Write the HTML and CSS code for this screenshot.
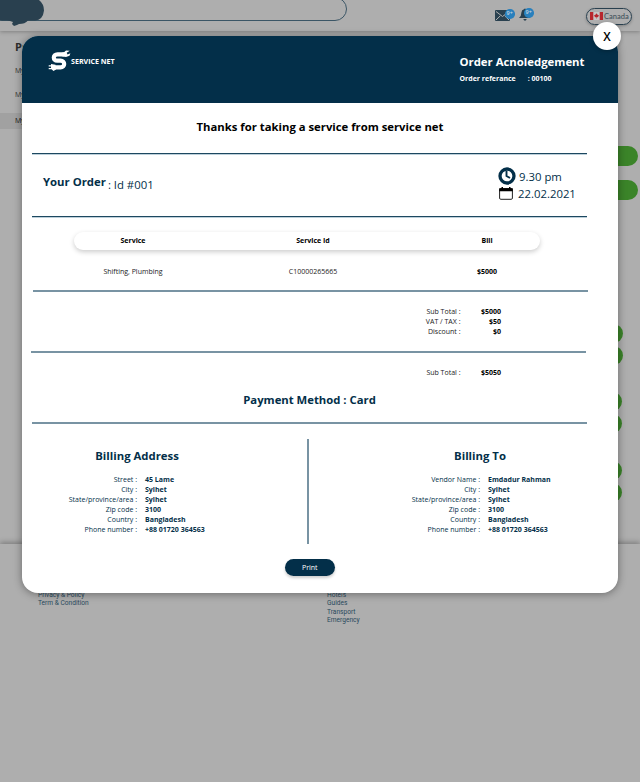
FILE: index.html
```html
<!DOCTYPE html>
<html lang="en">
<head>
<meta charset="utf-8">
<title>Order</title>
<link rel="stylesheet" href="styles.css">
</head>
<body>
<div class="page">
  <header class="topbar">
    <div class="brand">
      <svg class="brand-mark" width="90" height="31" viewBox="0 0 90 31"><path d="M0 0H39Q44 4 44 10.500Q43 20 35 20.500H28Q25 24 19 24L17 25L14 26L12 24L13 22L10 21L7 20.500H0Z" fill="#29404f"/></svg>
    </div>
    <div class="search"></div>
    <div class="alerts">
      <div class="alert mail">
        <svg width="15" height="11" viewBox="0 0 15 11"><rect width="15" height="11" rx="1" fill="#29404f"/><path d="M1 1.500L7.500 6.500L14 1.500M1 10L5.300 5.800M14 10L9.700 5.800" fill="none" stroke="#aeaeae"/></svg>
        <span class="count">9+</span>
      </div>
      <div class="alert bell">
        <svg width="12" height="13" viewBox="0 0 12 13"><path d="M0 10Q2.400 8 2.400 4.500Q2.600 1.700 5 1.200Q6 0 7 1.200Q9.500 2 9.500 5Q9.500 8 11.500 10ZM4.300 11H7.700Q7.200 12.800 6 12.800Q4.800 12.800 4.300 11Z" fill="#29404f"/></svg>
        <span class="count">9+</span>
      </div>
    </div>
    <div class="country">
      <svg width="13" height="8" viewBox="0 0 13 8"><rect width="13" height="8" fill="#c5c5c5"/><path d="M0 0H3.300V8H0ZM9.700 0H13V8H9.700ZM6.500 1.200L7.300 2.600L9 3.500L7.800 5.200L6.700 5.300V6.800H6.300V5.300L5.200 5.200L4 3.500L5.700 2.600Z" fill="#b7262d"/></svg>
      <span>Canada</span>
    </div>
  </header>
  <main class="content">
    <nav class="side">
      <h2>Profile</h2>
      <a>My Account</a>
      <a>My Service</a>
      <a class="current">My Order</a>
    </nav>
    <div class="actions">
      <i class="pill large"></i><i class="pill large"></i>
      <i class="pill first"></i><i class="pill"></i>
      <i class="pill near second"></i><i class="pill near"></i>
      <i class="pill near third"></i><i class="pill near"></i>
    </div>
  </main>
  <footer class="footer">
    <div class="links legal"><a>Privacy &amp; Policy</a><a>Term &amp; Condition</a></div>
    <div class="links"><a>Hotels</a><a>Guides</a><a>Transport</a><a>Emergency</a></div>
  </footer>
</div>

<section class="modal">
  <button class="close">X</button>
  <header class="modal-head">
    <div class="logo">
      <svg width="23" height="22" viewBox="0 0 23 22"><path d="M16.500 4.300H9.500C4.600 4.300 4.600 10.700 9.300 10.700H12.500C17.400 10.700 17.400 17.300 12.500 17.300H5.500" fill="none" stroke="#fff" stroke-width="4.200"/><path d="M14 2.800L16 2.200L18 .6L21.800 .8L18.700 2.800L19.500 4.400L22.400 3.200L21.500 5.800L18 7L14 6.300ZM7.500 14.700L6 14.500L3 14V15.200H.7V16.500H3V18H.7V19.300H3.500L5.500 21L8 19.400Z" fill="#fff"/></svg>
      <span>SERVICE NET</span>
    </div>
    <div class="ack">
      <h1>Order Acnoledgement</h1>
      <p><span>Order referance</span><span>: 00100</span></p>
    </div>
  </header>
  <h2 class="thanks">Thanks for taking a service from service net</h2>
  <hr class="rule">
  <div class="order">
    <div class="order-id"><strong>Your Order</strong><span>: Id #001</span></div>
    <div class="when">
      <div class="when-row"><svg width="18" height="18" viewBox="0 0 18 18"><circle cx="9" cy="9" r="7" fill="none" stroke="#032f49" stroke-width="3.300"/><path d="M8.500 4V9L12 11" fill="none" stroke="#032f49" stroke-width="1.900"/></svg><span class="time">9.30 pm</span></div>
      <div class="when-row"><svg class="calendar" width="14" height="13" viewBox="0 0 14 13"><rect x=".6" y="1.600" width="12.800" height="10.700" rx="1.200" fill="#fff" stroke="#222" stroke-width="1"/><path d="M.2 1.300H13.800V4.200H.2ZM2.500 0H4V2H2.500ZM10 0H11.500V2H10Z" fill="#000"/></svg><span class="date">22.02.2021</span></div>
    </div>
  </div>
  <hr class="rule">
  <div class="columns table-head"><span>Service</span><span>Service Id</span><span>Bill</span></div>
  <div class="columns table-row"><span>Shifting, Plumbing</span><span>C10000265665</span><strong>$5000</strong></div>
  <hr class="rule soft shifted">
  <dl class="totals">
    <dt>Sub Total :</dt><dd>$5000</dd>
    <dt>VAT / TAX :</dt><dd>$50</dd>
    <dt>Discount :</dt><dd>$0</dd>
  </dl>
  <hr class="rule soft outset">
  <dl class="totals grand"><dt>Sub Total :</dt><dd>$5050</dd></dl>
  <h2 class="payment">Payment Method : Card</h2>
  <hr class="rule soft">
  <div class="billing">
    <section class="party">
      <h3>Billing Address</h3>
      <dl>
        <dt>Street :</dt><dd>45 Lame</dd>
        <dt>City :</dt><dd>Sylhet</dd>
        <dt>State/province/area :</dt><dd>Sylhet</dd>
        <dt>Zip code :</dt><dd>3100</dd>
        <dt>Country :</dt><dd>Bangladesh</dd>
        <dt>Phone number :</dt><dd>+88 01720 364563</dd>
      </dl>
    </section>
    <div class="divider"></div>
    <section class="party vendor">
      <h3>Billing To</h3>
      <dl>
        <dt>Vendor Name :</dt><dd>Emdadur Rahman</dd>
        <dt>City :</dt><dd>Sylhet</dd>
        <dt>State/province/area :</dt><dd>Sylhet</dd>
        <dt>Zip code :</dt><dd>3100</dd>
        <dt>Country :</dt><dd>Bangladesh</dd>
        <dt>Phone number :</dt><dd>+88 01720 364563</dd>
      </dl>
    </section>
  </div>
  <button class="print">Print</button>
</section>
</body>
</html>
```
FILE: styles.css
```css
* { box-sizing: border-box; }
body { margin: 0; width: 640px; height: 782px; overflow: hidden; background: #aeaeae; font-family: "Open Sans", sans-serif; color: #032f49; }
h1, h2, h3, p, dl, dd, hr { margin: 0; padding: 0; border: 0; }
button { border: 0; padding: 0; font-family: inherit; }
svg { display: block; flex: none; }

.page { height: 782px; display: flex; flex-direction: column; }
.topbar { height: 31px; flex: none; display: flex; align-items: flex-start; box-shadow: 0 1px 4px #0004; }
.brand { width: 0; }
.brand-mark { position: relative; z-index: 1; }
.search { width: 357px; height: 24px; margin: -3px 0 0 -10px; border: 1.300px solid #3b5666; border-radius: 12px; }
.alerts { display: flex; margin-left: 148px; }
.alert { position: relative; }
.mail { margin-top: 10px; width: 24px; }
.bell { margin-top: 8px; }
.count { position: absolute; top: 0; left: 10px; width: 9.500px; height: 9.500px; border-radius: 50%; background: #2980bd; color: #c5d5df; font: 600 5.500px/9px "Open Sans", sans-serif; text-align: center; }
.mail .count { top: -1px; }
.bell .count { left: 5px; }
.country { display: flex; align-items: center; gap: 1px; width: 46px; height: 17px; margin: 7.500px 0 0 55px; padding-left: 3px; border: 1.400px solid #29404f; border-radius: 9px; font: 500 7.500px Lato, sans-serif; color: #42525c; box-shadow: 0 1px 3px #0004; }
.content { height: 512.500px; flex: none; display: flex; justify-content: space-between; }
.side { width: 120px; display: flex; flex-direction: column; font: 7px/16px "Open Sans", sans-serif; color: #2c2c2c; }
.side h2 { margin: 8px 0 8px 15px; font-size: 11px; line-height: 16px; }
.side a { padding-left: 15px; margin-bottom: 8px; height: 16px; }
.side .current { background: #a1a1a1; margin-top: 2px; color: #111; }
.actions { display: flex; flex-direction: column; align-items: flex-end; padding: 115px 2px 0 0; }
.pill { width: 60px; height: 19px; margin: 0 15px 3px 0; flex: none; border-radius: 10px; background: #3b8429; }
.pill.large { height: 20px; margin: 0 0 14px; }
.pill.first { margin-top: 110px; }
.pill.near { margin-right: 16px; }
.pill.second { margin-top: 24px; }
.pill.third { margin-top: 25px; }
.footer { flex: 1; display: flex; padding: 47.500px 38px 0; box-shadow: 0 -2px 5px #0004; font: 6.600px/8.300px Roboto, sans-serif; color: #29495c; }
.links { display: flex; flex-direction: column; }
.legal { width: 289px; }

.modal { position: absolute; left: 22px; top: 36px; width: 596px; height: 556.500px; border-radius: 16px; background: #fff; box-shadow: 0 1px 8px #0006; }
.close { position: absolute; right: -3px; top: -14px; width: 28px; height: 28px; border-radius: 50%; background: #fff; color: #000; font-size: 12px; font-weight: 600; box-shadow: 0 1px 4px #0004; }
.modal-head { height: 66.500px; border-radius: 16px 16px 0 0; background: #032f49; color: #fff; display: flex; justify-content: space-between; padding: 14px 33px 0 26px; }
.logo { display: flex; gap: 0; height: 22px; align-items: center; font-size: 7.100px; font-weight: 700; }
.ack { width: 125.500px; padding-top: 4px; white-space: nowrap; }
.ack h1 { font-size: 11.350px; line-height: 16px; font-weight: 700; }
.ack p { display: flex; gap: 12px; font-size: 7px; line-height: 17px; font-weight: 700; }
.thanks { margin-top: 15px; height: 35px; font-size: 11.300px; line-height: 17px; text-align: center; color: #000; font-weight: 700; }
.rule { width: 555px; height: 2px; margin: 0 0 -.8px 10px; background: linear-gradient(#1d4860 0 1px, #bdd0da 1px); }
.soft { background: #7893a3; margin-bottom: -.5px; }
.shifted { margin-left: 11px; }
.outset { margin-left: 9px; }
.order { height: 62px; display: flex; justify-content: space-between; padding: 14px 42px 0 21px; }
.order-id { display: flex; gap: 2px; font-size: 11.350px; line-height: 16px; padding-top: 6px; }
.order-id strong { font-weight: 700; }
.order-id span { padding-top: 3px; }
.when { width: 78px; font-size: 11.350px; line-height: 17px; }
.when-row { display: flex; align-items: center; height: 17px; gap: 3px; white-space: nowrap; }
.calendar { margin: 0 2px 0 1px; }
.columns { display: grid; grid-template-columns: 118px 242px 106px; width: 466px; margin-left: 52px; text-align: center; font-size: 7px; line-height: 18px; color: #000; }
.table-head { margin-top: 15px; height: 18px; border-radius: 9px; box-shadow: 0 2px 5px #0003; font-weight: 700; }
.table-row { margin-top: 13px; height: 27.500px; color: #222; }
.table-row strong { color: #000; }
.totals { display: grid; grid-template-columns: 438.500px 40.500px; padding-top: 15px; height: 59.500px; font-size: 7px; line-height: 10px; color: #222; text-align: right; align-content: start; }
.totals dd { font-weight: 700; color: #000; }
.grand { height: 36px; }
.payment { height: 33.500px; margin-left: -21px; font-size: 11.300px; line-height: 22px; text-align: center; font-weight: 700; }
.billing { display: flex; height: 135.500px; padding: 15.500px 0 0 35px; }
.party { width: 250.500px; padding-top: 7.500px; }
.party h3 { width: 160px; text-align: center; font-size: 11.350px; line-height: 17px; font-weight: 700; }
.party dl { display: grid; grid-template-columns: 80px 120px; column-gap: 8px; margin-top: 11.500px; font-size: 7px; line-height: 10px; }
.party dt { text-align: right; }
.party dd { font-weight: 700; }
.divider { width: 2px; margin: 0 .5px 0 -1px; height: 105px; background: #7893a3; }
.vendor { padding-left: 91px; }
.print { display: block; width: 49.500px; height: 17px; margin-left: 263px; border-radius: 9px; background: #032f49; color: #fff; font-size: 7px; box-shadow: 0 2px 3px #0003; }
```
